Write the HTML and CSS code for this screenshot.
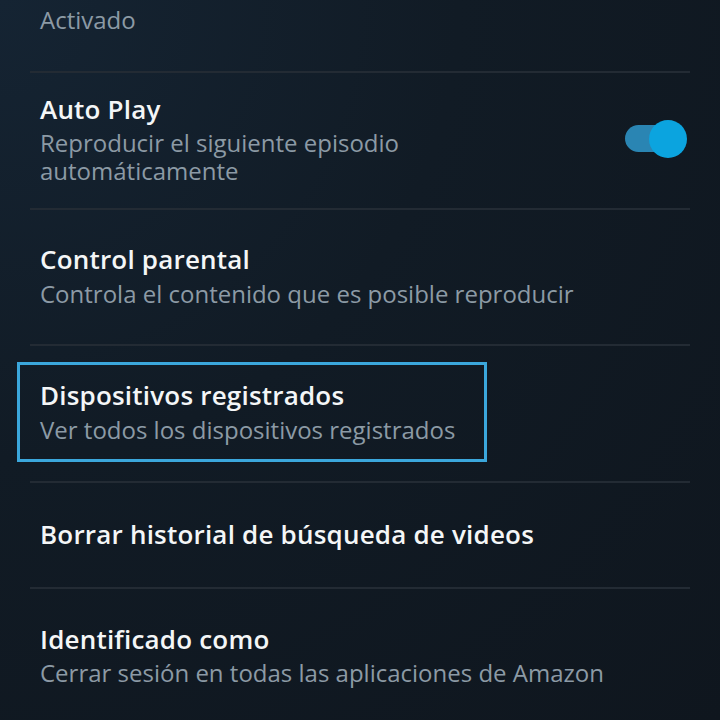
FILE: index.html
```html
<!DOCTYPE html>
<html lang="es">

<head>
    <meta charset="UTF-8">
    <meta name="viewport" content="width=device-width, initial-scale=1.0">
    <title>Ajustes</title>
    <link rel="stylesheet" href="styles.css">
</head>

<body>
    <div class="settings">
        <div class="row row-top">
            <div class="sub">Activado</div>
        </div>

        <div class="row row-toggle">
            <div class="text">
                <div class="title">Auto Play</div>
                <div class="sub">Reproducir el siguiente episodio<br>automáticamente</div>
            </div>
            <div class="toggle">
                <div class="track"></div>
                <div class="knob"></div>
            </div>
        </div>

        <div class="row">
            <div class="title">Control parental</div>
            <div class="sub">Controla el contenido que es posible reproducir</div>
        </div>

        <div class="row row-focus">
            <div class="focus-box">
                <div class="title">Dispositivos registrados</div>
                <div class="sub">Ver todos los dispositivos registrados</div>
            </div>
        </div>

        <div class="row row-single">
            <div class="title">Borrar historial de búsqueda de videos</div>
        </div>

        <div class="row row-last">
            <div class="title">Identificado como</div>
            <div class="sub">Cerrar sesión en todas las aplicaciones de Amazon</div>
        </div>
    </div>
</body>

</html>
```

FILE: styles.css
```css
body {
    margin: 0;
    height: 720px;
    overflow: hidden;
    background: radial-gradient(ellipse at 0 0, #152433 0%, #111b25 45%, #0f161e 100%);
    font-family: "Open Sans", "DejaVu Sans", sans-serif;
}

.settings {
    margin: 0 30px;
}

.row {
    padding: 32px 0 36px 10px;
    border-top: 2px solid #232b34;
}

.row-top {
    padding-top: 5px;
    border-top: none;
}

.title {
    font-size: 26px;
    line-height: 34px;
    font-weight: 600;
    letter-spacing: 0.2px;
    color: #f4f6f7;
}

.sub {
    margin-top: 4px;
    font-size: 24px;
    line-height: 28px;
    color: #8c9aa5;
}

.row-top .sub {
    margin-top: 0;
    line-height: 30px;
}

/* Auto Play row with the switch on the right */
.row-toggle {
    display: flex;
    align-items: center;
    justify-content: space-between;
    padding-top: 19px;
    padding-bottom: 23px;
}

.row-toggle .sub {
    margin-top: 3px;
}

.toggle {
    position: relative;
    width: 62px;
    height: 38px;
    margin-right: 3px;
}

.track {
    position: absolute;
    left: 0;
    top: 5px;
    width: 46px;
    height: 27px;
    border-radius: 14px;
    background: #2a85b3;
}

.knob {
    position: absolute;
    right: 0;
    top: 0;
    width: 38px;
    height: 38px;
    border-radius: 50%;
    background: #0ba4df;
}

/* focused item */
.row-focus {
    padding: 16px 0 19px 0;
}

.focus-box {
    width: 424px;
    margin-left: -13px;
    padding: 13px 20px 15px 20px;
    border: 3px solid #3ba7dc;
}

.row-single {
    padding-top: 34px;
}

.row-last {
    padding-top: 33px;
}

.row-last .sub {
    margin-top: 3px;
}
```
